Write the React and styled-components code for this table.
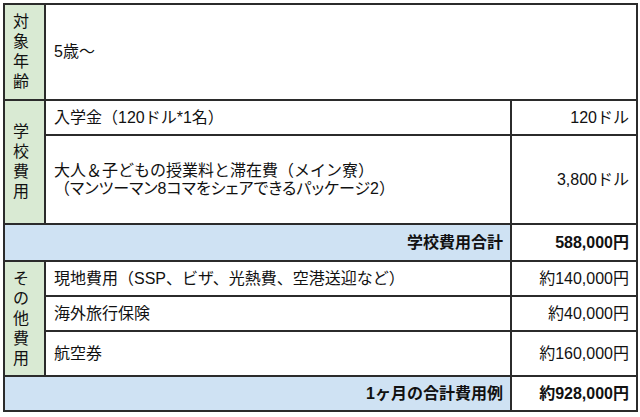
import React from "react";
import styled, { createGlobalStyle } from "styled-components";

const GlobalStyle = createGlobalStyle`
  html, body {
    margin: 0;
    padding: 0;
    background: #ffffff;
  }
  body {
    font-family: "Liberation Sans", Arial, "Noto Sans CJK JP", sans-serif;
    color: #111;
  }
`;

const Wrap = styled.div`
  padding: 3px 4px 0 3px;
`;

const Table = styled.table`
  width: 633px;
  border-collapse: collapse;
  table-layout: fixed;
  font-size: 16px;
  border: 2px solid #2b2b2b;
`;

const Row = styled.tr`
  height: ${(p) => p.h}px;
`;

const Cell = styled.td`
  border: 2px solid #2b2b2b;
  padding: 0 7px 0 8px;
  text-align: ${(p) => (p.right ? "right" : "left")};
  font-weight: ${(p) => (p.bold ? 700 : 400)};
  background: ${(p) => (p.total ? "#cfe2f3" : "#ffffff")};
  vertical-align: middle;
  line-height: 18px;
  white-space: nowrap;
`;

const Head = styled.th`
  border: 2px solid #2b2b2b;
  background: #d9ead3;
  font-weight: 400;
  text-align: left;
  padding: 0 0 0 8px;
  vertical-align: middle;
  line-height: 20px;
`;

const Narrow = styled.span`
  font-feature-settings: "palt";
`;

const Stack = styled.span`
  display: flex;
  flex-direction: column;
`;

const Label = ({ text }) => (
  <Stack>
    {text.split("").map((c, i) => (
      <span key={i}>{c}</span>
    ))}
  </Stack>
);

export default function App() {
  return (
    <>
      <GlobalStyle />
      <Wrap>
        <Table>
          <colgroup>
            <col style={{ width: 41 }} />
            <col style={{ width: 466 }} />
            <col style={{ width: 126 }} />
          </colgroup>
          <tbody>
            <Row h={96}>
              <Head>
                <Label text="対象年齢" />
              </Head>
              <Cell colSpan={2}>5歳〜</Cell>
            </Row>
            <Row h={35}>
              <Head rowSpan={2}>
                <Label text="学校費用" />
              </Head>
              <Cell>入学金（120ドル*1名）</Cell>
              <Cell right>120ドル</Cell>
            </Row>
            <Row h={89}>
              <Cell>
                大人＆子どもの授業料と滞在費（メイン寮）
                <br />
                （<Narrow>マンツーマン8コマをシェアできるパッケージ2</Narrow>）
              </Cell>
              <Cell right>3,800ドル</Cell>
            </Row>
            <Row h={37}>
              <Cell colSpan={2} right bold total>
                学校費用合計
              </Cell>
              <Cell right bold>
                588,000円
              </Cell>
            </Row>
            <Row h={35}>
              <Head rowSpan={3}>
                <Label text="その他費用" />
              </Head>
              <Cell>現地費用（SSP、ビザ、光熱費、空港送迎など）</Cell>
              <Cell right>約140,000円</Cell>
            </Row>
            <Row h={35}>
              <Cell>海外旅行保険</Cell>
              <Cell right>約40,000円</Cell>
            </Row>
            <Row h={45}>
              <Cell>航空券</Cell>
              <Cell right>約160,000円</Cell>
            </Row>
            <Row h={35}>
              <Cell colSpan={2} right bold total>
                1ヶ月の合計費用例
              </Cell>
              <Cell right bold>
                約928,000円
              </Cell>
            </Row>
          </tbody>
        </Table>
      </Wrap>
    </>
  );
}
